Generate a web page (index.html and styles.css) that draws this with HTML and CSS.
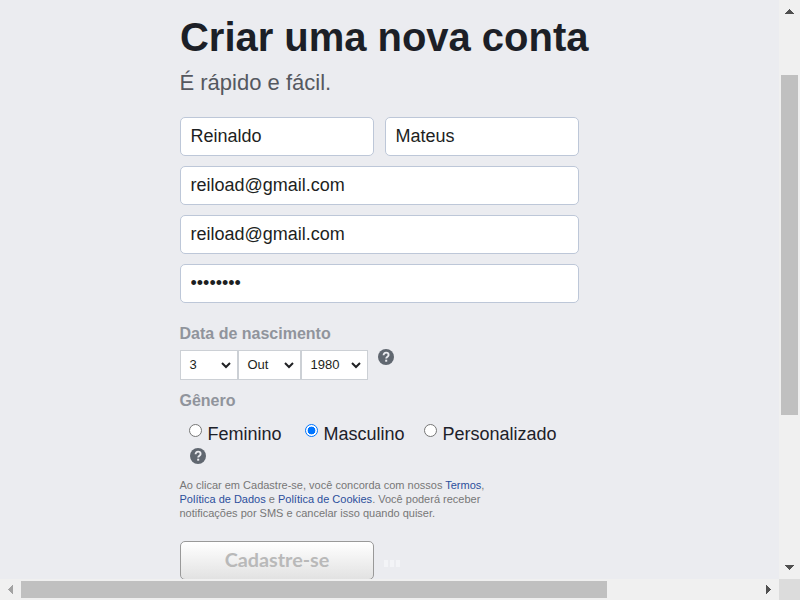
FILE: index.html
```html
<!DOCTYPE html>
<html lang="pt-BR">
<head>
<meta charset="utf-8">
<title>Criar uma nova conta</title>
<link rel="stylesheet" href="styles.css">
</head>
<body>
<div class="window">
  <main class="page">
    <form class="signup">
      <h1 class="title">Criar uma nova conta</h1>
      <p class="subtitle">É rápido e fácil.</p>
      <div class="fields">
        <input class="field" type="text" value="Reinaldo">
        <input class="field" type="text" value="Mateus">
        <input class="field wide" type="text" value="reiload@gmail.com">
        <input class="field wide" type="text" value="reiload@gmail.com">
        <input class="field wide" type="password" value="senha123">
      </div>
      <h2 class="label birth-label">Data de nascimento</h2>
      <div class="birthday">
        <div class="select day"><span>3</span><svg class="chevron" viewBox="0 0 10 6"><path d="M1 1l4 4 4-4"/></svg></div>
        <div class="select month"><span>Out</span><svg class="chevron" viewBox="0 0 10 6"><path d="M1 1l4 4 4-4"/></svg></div>
        <div class="select year"><span>1980</span><svg class="chevron" viewBox="0 0 10 6"><path d="M1 1l4 4 4-4"/></svg></div>
        <svg class="help" viewBox="0 0 16 16"><circle cx="8" cy="8" r="8"/><path d="M5.6 6.3c0-1.7 1-2.7 2.5-2.7s2.5.9 2.5 2.3c0 1.7-2.4 1.8-2.4 3.6"/><rect x="7.2" y="10.7" width="2" height="2"/></svg>
      </div>
      <h2 class="label gender-label">Gênero</h2>
      <div class="genders">
        <label class="choice female"><i class="radio"></i><span>Feminino</span></label>
        <label class="choice male"><i class="radio checked"></i><span>Masculino</span></label>
        <label class="choice"><i class="radio"></i><span>Personalizado</span></label>
      </div>
      <svg class="help gender-help" viewBox="0 0 16 16"><circle cx="8" cy="8" r="8"/><path d="M5.6 6.3c0-1.7 1-2.7 2.5-2.7s2.5.9 2.5 2.3c0 1.7-2.4 1.8-2.4 3.6"/><rect x="7.2" y="10.7" width="2" height="2"/></svg>
      <p class="terms">Ao clicar em Cadastre-se, você concorda com nossos <a>Termos</a>,<br><a>Política de Dados</a> e <a>Política de Cookies</a>. Você poderá receber<br>notificações por SMS e cancelar isso quando quiser.</p>
      <div class="actions">
        <button class="submit" type="button">Cadastre-se</button>
        <div class="loading"><i></i><i></i><i></i></div>
      </div>
    </form>
  </main>
  <div class="vbar">
    <svg class="varrow" viewBox="0 0 21 21"><path d="M6 14h9l-4-5h-1z"/></svg>
    <div class="vthumb"></div>
    <svg class="varrow bottom" viewBox="0 0 21 21"><path d="M6 7h9l-4 5h-1z"/></svg>
  </div>
  <div class="hbar">
    <svg class="harrow off" viewBox="0 0 21 21"><path d="M13 6v9l-5-4v-1z"/></svg>
    <div class="hthumb"></div>
    <svg class="harrow right" viewBox="0 0 21 21"><path d="M8 6v9l5-4v-1z"/></svg>
  </div>
  <div class="corner"></div>
</div>
</body>
</html>
```
FILE: styles.css
```css
* { box-sizing: border-box; }
body { margin: 0; overflow: hidden; font-family: "Liberation Sans", Arial, sans-serif; color: #1d2129; }
.window { display: grid; grid-template: 579px 21px / 779px 21px; width: 800px; height: 600px; }
.page { overflow: hidden; background: #ebecf0; padding-left: 180px; }
.signup { width: 420px; }
h1, h2, p { margin: 0; }
.title { padding-top: 14px; font-size: 40px; line-height: 46px; letter-spacing: -.03px; white-space: nowrap; color: #1c1f27; }
.subtitle { padding-top: 10px; font-size: 22px; line-height: 26px; color: #55585f; text-indent: -.5px; }
.fields { display: grid; grid-template-columns: 194px 194px; gap: 10px 11px; margin-top: 21px; }
.field { width: 100%; height: 39px; padding: 0 9.5px; border: 1px solid #bdc7d8; border-radius: 5px; background: #fff; font: 18px "Liberation Sans", Arial, sans-serif; color: #1d1f22; outline: 0; }
.wide { grid-column: 1 / 3; }
.label { font-size: 16px; line-height: 20px; color: #90949c; text-indent: -.5px; }
.birth-label { margin-top: 21px; }
.birthday { display: flex; margin-top: 6px; height: 30px; }
.select { display: flex; align-items: center; justify-content: space-between; padding: 0 6px 2px 8.5px; border: 1px solid #ccd0d5; background: #fff; font-size: 13px; color: #1d1f22; }
.day { width: 58px; }
.month { width: 63px; }
.year { width: 67px; }
.chevron { width: 10px; height: 6px; margin-top: 2px; fill: none; stroke: #202124; stroke-width: 2; overflow: visible; }
.help { display: block; width: 16px; height: 16px; margin: -1px 0 0 10px; }
.help circle { fill: #606770; }
.help path { fill: none; stroke: #ebecf0; stroke-width: 1.9; }
.help rect { fill: #ebecf0; }
.gender-label { margin-top: 11px; }
.genders { display: flex; margin: 13px 0 0 9px; height: 22px; }
.choice { display: flex; font-size: 18px; line-height: 20px; }
.radio { width: 13px; height: 13px; margin-right: 5.5px; border: 1px solid #767676; border-radius: 50%; background: #fff; }
.checked { border-color: #0075ff; background: radial-gradient(circle, #0075ff 3.6px, #fff 4.2px); }
.female { width: 116px; }
.male { width: 119px; }
.gender-help { margin-top: 2px; }
.terms { margin-top: 14px; font-size: 11px; line-height: 14px; color: #777; white-space: nowrap; margin-left: -.5px; }
.terms a { color: #2c4f9c; }
.actions { display: flex; margin-top: 21px; }
.submit { width: 194px; height: 39px; padding: 0 0 3px; border: 1px solid #999; border-radius: 5px; background: linear-gradient(#fff, #e2e2e2); font: bold 19.8px Lato, sans-serif; color: #b9b9b9; }
.loading { display: flex; gap: 2px; padding: 19px 0 0 10px; }
.loading i { width: 4px; height: 7px; background: #f3f4f7; }
.vbar, .hbar { display: flex; background: #f0f0f0; }
.vbar { flex-direction: column; }
.varrow, .harrow { flex: none; width: 21px; height: 21px; fill: #505050; shape-rendering: crispEdges; }
.vthumb { width: 17px; height: 340px; margin: 54px 0 0 2px; background: #c0c0c0; }
.bottom { margin-top: 143px; }
.hthumb { width: 586px; height: 17px; margin-top: 2px; background: #c0c0c0; }
.off { fill: #a3a3a3; }
.right { margin-left: auto; }
.corner { background: #dcdcdc; }
```
